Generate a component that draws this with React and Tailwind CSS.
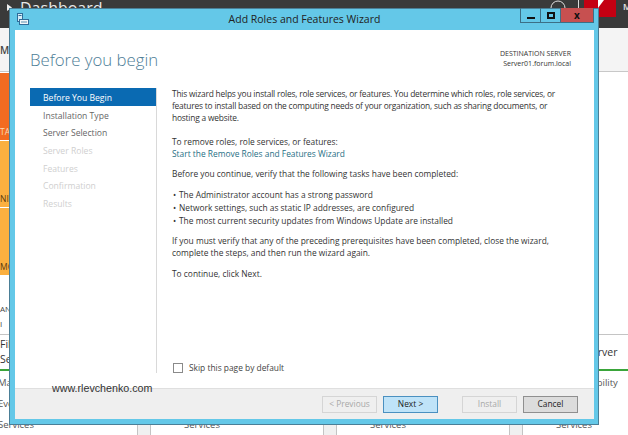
import React from "react";

const nav = [
  ["Before You Begin", "active"],
  ["Installation Type", "on"],
  ["Server Selection", "on"],
  ["Server Roles", "off"],
  ["Features", "off"],
  ["Confirmation", "off"],
  ["Results", "off"],
];

const cards = [
  ["File and Storage", "Services"],
  ["Hyper-V", ""],
  ["IIS", ""],
  ["Local Server", ""],
];

function Btn({ children, kind }) {
  const cls = {
    dis: "border-[#d5d5d5] bg-[#efefef] text-[#a8a8a8]",
    next: "border-[#4a90c0] bg-[#bfe3f8] text-[#222]",
    cancel: "border-[#8f8f8f] bg-[#dcdcdc] text-[#222]",
  }[kind];
  return (
    <div className={`w-[55px] h-[17px] border flex items-center justify-center text-[8.4px] ${cls}`}>{children}</div>
  );
}

function Tile({ color, label, h }) {
  return (
    <div className={`w-[30px] flex items-end pb-[2px] text-[8.5px] leading-[12px] text-[#5a3a10] overflow-hidden ${h} ${color}`}>
      <span className="block">{label}</span>
    </div>
  );
}

function Bullet({ children, className = "" }) {
  return (
    <div className={`flex leading-[13px] ${className}`}>
      <span className="w-[7px] shrink-0 pl-[1px]">•</span>
      <span>{children}</span>
    </div>
  );
}

export default function App() {
  return (
    <div className="relative w-[628px] h-[435px] overflow-hidden bg-white text-[#333] flex flex-col" style={{ fontFamily: '"Open Sans","Noto Sans",sans-serif' }}>
      {/* Background: server manager */}
      <div className="h-[28px] shrink-0 bg-[#3a3a3a] text-[#e8e8e8] flex items-start overflow-hidden">
        <svg className="ml-[7px] mt-[4px]" width="5" height="7" viewBox="0 0 5 7"><path d="M0 0 L5 3.5 L0 7 Z" fill="#eee" /></svg>
        <span className="text-[16px] leading-[16px] ml-[8px]">Dashboard</span>
        <div className="ml-auto flex items-start">
          <svg width="18" height="12" viewBox="0 0 18 12" className="mr-[11px]">
            <circle cx="9" cy="8" r="7" fill="none" stroke="#ddd" strokeWidth="1" />
          </svg>
          <div className="w-[1px] h-[10px] bg-[#ddd] mr-[5px]" />
          <div className="w-[32px] h-[17px] bg-[#c40012] mr-[7px] relative overflow-hidden">
            <svg className="absolute left-[11px] top-0" width="9" height="8" viewBox="0 0 9 8"><path d="M3 0 L9 0 L3 8 Z" fill="#fff" /></svg>
          </div>
          <span className="text-[9px] leading-[14px] font-semibold w-[5px] overflow-hidden">M</span>
        </div>
      </div>
      <div className="h-[44px] shrink-0 bg-[#f4f4f4] border-b border-[#c8c8c8] flex items-center pt-[1px] text-[10px] font-semibold text-[#444]">M</div>
      <div className="h-[1px] shrink-0 bg-white" />
      <div className="flex flex-col gap-[1px] shrink-0">
        <Tile color="bg-[#f26b21]" label="TA" h="h-[67px] text-[#fbd9b5]" />
        <Tile color="bg-[#fbb040]" label="NI" h="h-[66px]" />
        <Tile color="bg-[#fbb040]" label="MO" h="h-[67px]" />
      </div>
      <div className="h-[59px] shrink-0 flex flex-col justify-end pb-[3px] text-[8px] leading-[15px] text-[#444]">
        <div>AN</div>
        <div>I</div>
      </div>
      <div className="flex-1 flex ml-[-36px] gap-[12px] bg-[#f0f0f0]">
        {cards.map(([a, b]) => (
          <div key={a} className="w-[174px] shrink-0 bg-white border-x border-[#c4c4c4] border-t">
            <div className="h-[36px] border-b-2 border-[#3aa53a] pl-[35px] flex flex-col justify-center text-[10.5px] leading-[15px] text-[#333]">
              <div>{a}</div>
              {b && <div>{b}</div>}
            </div>
            <div className="pl-[33px] pt-[1px] text-[9.5px] leading-[21px] text-[#555]">
              <div>Manageability</div>
              <div>Events</div>
              <div>Services</div>
            </div>
          </div>
        ))}
      </div>

      {/* Wizard window */}
      <div className="absolute left-[9px] top-[8px] w-[590px] h-[417px] border border-[#4a7f97] bg-[#64c8e8] flex flex-col pl-[5px] pr-[4px] pb-[5px]">
        <div className="h-[21px] shrink-0 relative flex items-center justify-center text-[10.5px] text-[#222]">
          Add Roles and Features Wizard
          <svg className="absolute left-[2px] top-[4px]" width="12" height="12" viewBox="0 0 12 12">
            <rect x="0.5" y="0.5" width="5" height="8" fill="#d6ecf7" stroke="#2f6c99" />
            <rect x="1.5" y="2" width="3" height="1" fill="#2f6c99" />
            <rect x="2.5" y="6.5" width="9" height="5" fill="#f2f6f8" stroke="#2f6c99" />
            <rect x="4" y="8.5" width="6" height="1" fill="#5b8fb0" />
          </svg>
          <div className="absolute right-0 top-[-1px] flex h-[15px] border border-[#3c6f86] border-t-0">
            <div className="w-[20px] flex items-end justify-center pb-[3px] border-r border-[#3c6f86]"><div className="w-[8px] h-[2px] bg-[#111]" /></div>
            <div className="w-[20px] flex items-center justify-center border-r border-[#3c6f86]"><div className="w-[8px] h-[7px] border-2 border-[#111]" /></div>
            <div className="w-[32px] bg-[#c75050] flex items-center justify-center text-[10px] leading-[10px] font-bold text-[#111]">x</div>
          </div>
        </div>
        <div className="flex-1 bg-white flex flex-col min-h-0">
          <div className="flex-1 flex flex-col min-h-0">
            <div className="flex justify-between pt-[19px] pr-[23px] pl-[15px] h-[58px] shrink-0">
              <div className="text-[16.8px] leading-[22px] text-[#4d7d96] font-light">Before you begin</div>
              <div className="text-right text-[7px] leading-[10px] text-[#333]">
                <div>DESTINATION SERVER</div>
                <div>Server01.forum.local</div>
              </div>
            </div>
            <div className="flex flex-1 min-h-0 pb-[15px]">
              <div className="w-[127px] ml-[15px] border-r border-[#d9d9d9] flex flex-col">
                {nav.map(([t, s]) => (
                  <div key={t} className={`h-[17.7px] flex items-center pl-[13px] pt-[3px] text-[8.6px] ${s === "active" ? "bg-[#0a6ab2] text-white" : s === "on" ? "text-[#666]" : "text-[#cfcfcf]"}`}>{t}</div>
                ))}
              </div>
              <div className="flex-1 pl-[15px] pr-[38px] flex flex-col">
                <div className="text-[8.4px] leading-[12px] text-[#333]">
                  <p className="mb-[12px] tracking-[-0.2px] whitespace-nowrap">
                    This wizard helps you install roles, role services, or features. You determine which roles, role services, or<br />
                    features to install based on the computing needs of your organization, such as sharing documents, or<br />
                    hosting a website.
                  </p>
                  <p>To remove roles, role services, or features:</p>
                  <p className="text-[#1f6f85] mb-[8px]">Start the Remove Roles and Features Wizard</p>
                  <p className="mb-[8px]">Before you continue, verify that the following tasks have been completed:</p>
                  <Bullet>The Administrator account has a strong password</Bullet>
                  <Bullet>Network settings, such as static IP addresses, are configured</Bullet>
                  <Bullet className="mb-[8px]">The most current security updates from Windows Update are installed</Bullet>
                  <p className="mb-[9px]">If you must verify that any of the preceding prerequisites have been completed, close the wizard, complete the steps, and then run the wizard again.</p>
                  <p>To continue, click Next.</p>
                </div>
                <div className="mt-auto flex items-center gap-[6px] text-[8.4px] leading-[10px] text-[#444] ml-[1px]">
                  <div className="w-[10px] h-[10px] border border-[#8a8a8a] bg-white" />
                  Skip this page by default
                </div>
              </div>
            </div>
          </div>
          <div className="h-[31px] shrink-0 bg-[#efefef] border-t border-[#dfdfdf] flex items-center justify-end pr-[16px]">
            <div className="flex gap-[6px]">
              <Btn kind="dis">&lt; Previous</Btn>
              <Btn kind="next">Next &gt;</Btn>
            </div>
            <div className="flex gap-[6px] ml-[24px]">
              <Btn kind="dis">Install</Btn>
              <Btn kind="cancel">Cancel</Btn>
            </div>
          </div>
        </div>
      </div>
      <div className="absolute left-[52px] top-[382px] text-[10.7px] leading-[13px] text-[#333]" style={{ fontFamily: '"Liberation Sans",sans-serif' }}>www.rlevchenko.com</div>
    </div>
  );
}
